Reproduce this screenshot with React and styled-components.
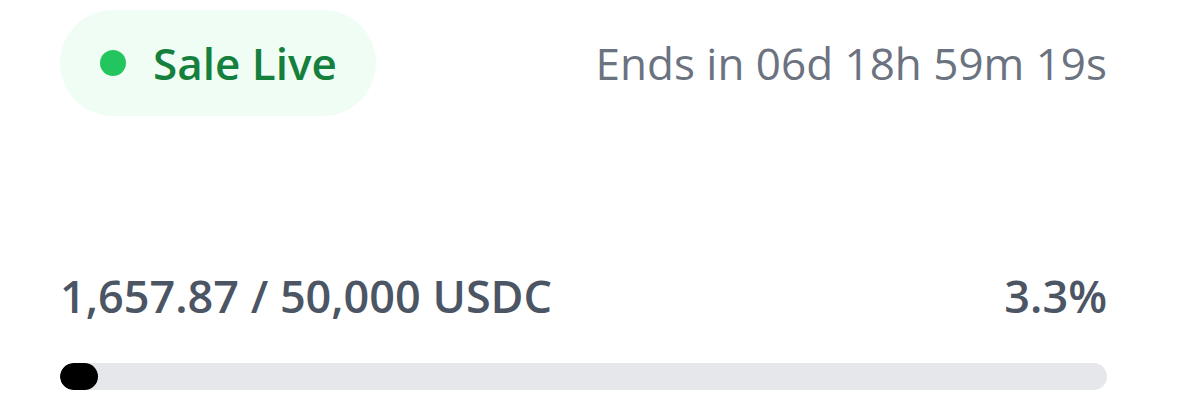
import React from 'react';
import styled, { createGlobalStyle } from 'styled-components';

const GlobalStyle = createGlobalStyle`
  html, body {
    margin: 0;
    padding: 0;
    background: #ffffff;
  }
  body {
    font-family: "Open Sans", "Noto Sans", sans-serif;
  }
`;

const Card = styled.section`
  width: 1047px;
  padding: 10px 0 0 60px;
  display: flex;
  flex-direction: column;
`;

const Header = styled.div`
  display: flex;
  align-items: center;
  justify-content: space-between;
  height: 106px;
`;

const StatusPill = styled.div`
  display: inline-flex;
  align-items: center;
  gap: 27px;
  height: 106px;
  box-sizing: border-box;
  padding: 0 39px 0 40px;
  border-radius: 999px;
  background: #f0fdf4;
  color: #15803d;
  font-size: 44px;
  font-weight: 600;
`;

const Dot = styled.span`
  width: 26px;
  height: 26px;
  border-radius: 50%;
  background: #22c55e;
`;

const Countdown = styled.span`
  font-size: 44px;
  color: #6b7280;
`;

const Stats = styled.div`
  margin-top: 148px;
  display: flex;
  justify-content: space-between;
  align-items: center;
  font-size: 45px;
  font-weight: 600;
  color: #4b5563;
  line-height: 1.4;
`;

const Track = styled.div`
  margin-top: 36px;
  height: 27px;
  border-radius: 999px;
  background: #e5e7eb;
  overflow: hidden;
`;

const Fill = styled.div`
  height: 100%;
  border-radius: 999px;
  background: #000000;
`;

const raised = 1657.87;
const goal = 50000;

export default function App() {
  const pct = (raised / goal) * 100;
  return (
    <>
      <GlobalStyle />
      <Card>
        <Header>
          <StatusPill>
            <Dot />
            Sale Live
          </StatusPill>
          <Countdown>Ends in 06d 18h 59m 19s</Countdown>
        </Header>
        <Stats>
          <span>1,657.87 / 50,000 USDC</span>
          <span>{pct.toFixed(1)}%</span>
        </Stats>
        <Track>
          <Fill style={{ width: `${Math.max(pct, 3.6)}%` }} />
        </Track>
      </Card>
    </>
  );
}
